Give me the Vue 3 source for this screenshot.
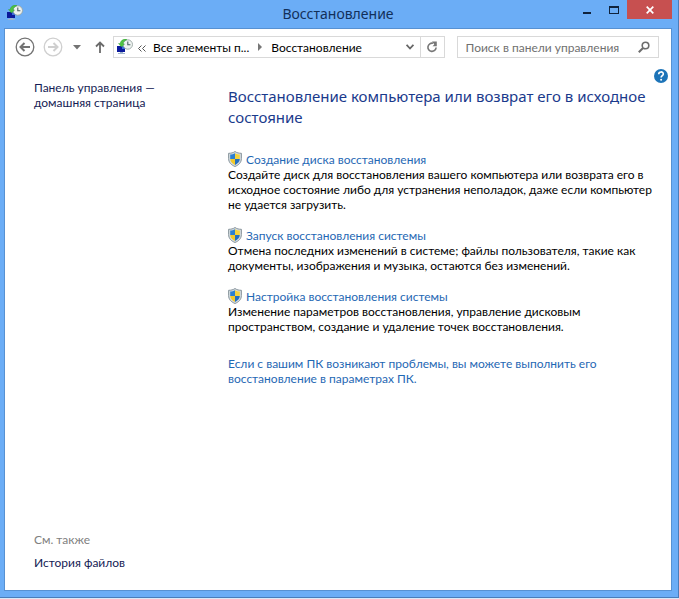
<script setup>
import { ref } from 'vue'

const query = ref('')
const tasks = [
  {
    title: 'Создание диска восстановления',
    lines: [
      'Создайте диск для восстановления вашего компьютера или возврата его в',
      'исходное состояние либо для устранения неполадок, даже если компьютер',
      'не удается загрузить.',
    ],
  },
  {
    title: 'Запуск восстановления системы',
    lines: [
      'Отмена последних изменений в системе; файлы пользователя, такие как',
      'документы, изображения и музыка, остаются без изменений.',
    ],
  },
  {
    title: 'Настройка восстановления системы',
    lines: [
      'Изменение параметров восстановления, управление дисковым',
      'пространством, создание и удаление точек восстановления.',
    ],
  },
]
</script>

<template>
  <div class="window">
    <svg class="defs" aria-hidden="true">
      <symbol id="recovery" viewBox="0 0 16 16">
        <path d="M0 7h8v6H0z" fill="#0b1a9c" />
        <path d="M5 7h3v3H5z" fill="#3e6fd8" />
        <path d="M3 13h3v1h2v1H1v-1h2z" fill="#9fb4cc" />
        <circle cx="10.800" cy="5.500" r="4.700" fill="#eef3f0" stroke="#9aa6a4" stroke-width=".9" />
        <path d="M10.800 2.500v3.300h2.600" fill="none" stroke="#4b5f63" stroke-width="1.100" />
        <path d="M9.500 0C5.500 0 3.500 2 3.200 4.500L1.500 4.500 4.500 8 7.500 5 6 4.700C6.200 3 7.500 1.500 9.500 1z" fill="#4fc342" stroke="#2d9a35" stroke-width=".4" />
      </symbol>
      <symbol id="shield" viewBox="0 0 14 16">
        <path d="M7 .5C5.200 1.800 3 2.300.6 2.300v5.200c0 4 2.600 6.500 6.400 8 3.800-1.500 6.400-4 6.400-8V2.300C11 2.300 8.800 1.800 7 .5z" fill="#d5dde2" stroke="#7e8b93" stroke-width=".9" />
        <path d="M7 2.200C5.500 3.100 4 3.500 2.200 3.600V8H7z" fill="#2b7fd0" />
        <path d="M7 2.200c1.500.9 3 1.300 4.800 1.400V8H7z" fill="#f5d33c" />
        <path d="M2.200 8c.2 2.800 2 4.700 4.800 5.900V8z" fill="#f2c929" />
        <path d="M11.800 8c-.2 2.800-2 4.700-4.800 5.900V8z" fill="#236fc0" />
      </symbol>
    </svg>

    <header class="titlebar">
      <svg class="app-icon"><use href="#recovery" /></svg>
      <h1>Восстановление</h1>
      <div class="controls">
        <button class="control" aria-label="Свернуть">
          <svg width="10" height="10" viewBox="0 0 10 10"><path d="M1 7h8v2H1z" fill="#10233d" /></svg>
        </button>
        <button class="control" aria-label="Развернуть">
          <svg width="10" height="8" viewBox="0 0 10 8"><path d="M0 0h10v8H0zM1 2v5h8V2z" fill="#10233d" fill-rule="evenodd" /></svg>
        </button>
        <button class="control close" aria-label="Закрыть">
          <svg width="8" height="8" viewBox="0 0 8 8"><path d="M.7.7l6.600 6.600M7.300.7L.7 7.300" stroke="#fff" stroke-width="1.700" /></svg>
        </button>
      </div>
    </header>

    <div class="client">
      <nav class="toolbar">
        <button class="icon-button" aria-label="Назад">
          <svg width="20" height="20" viewBox="0 0 20 20" fill="none" stroke="#737373">
            <circle cx="10" cy="10" r="8.800" stroke-width="1.300" />
            <path d="M15 10H6M9.500 6L5.500 10l4 4" stroke-width="2" />
          </svg>
        </button>
        <button class="icon-button forward" aria-label="Вперед">
          <svg width="20" height="20" viewBox="0 0 20 20" fill="none" stroke="#cfcfcf">
            <circle cx="10" cy="10" r="8.800" stroke-width="1.300" />
            <path d="M5 10h9M10.500 6l4 4-4 4" stroke-width="2" />
          </svg>
        </button>
        <button class="icon-button recent" aria-label="Последние расположения">
          <svg width="8" height="5" viewBox="0 0 8 5"><path d="M0 0h8L4 4.500z" fill="#737373" /></svg>
        </button>
        <button class="icon-button up" aria-label="Вверх">
          <svg width="10" height="12" viewBox="0 0 10 12" fill="none" stroke="#6b6b6b" stroke-width="1.800"><path d="M5 12V1.500M1 5.500l4-4 4 4" /></svg>
        </button>
        <div class="address">
          <svg class="place-icon"><use href="#recovery" /></svg>
          <svg class="chevrons" width="8" height="7" viewBox="0 0 8 7" fill="none" stroke="#555"><path d="M3.500.5l-3 3 3 3M7.500.5l-3 3 3 3" /></svg>
          <a class="crumb" href="#">Все элементы п...</a>
          <svg class="separator" width="4" height="8" viewBox="0 0 4 8"><path d="M0 0l4 4-4 4z" fill="#777" /></svg>
          <a class="crumb" href="#">Восстановление</a>
          <button class="icon-button history" aria-label="Журнал адресов">
            <svg width="8" height="6" viewBox="0 0 8 6" fill="none" stroke="#666" stroke-width="1.800"><path d="M.6.8L4 4.500 7.400.8" /></svg>
          </button>
          <button class="icon-button refresh" aria-label="Обновить">
            <svg width="12" height="12" viewBox="0 0 12 12"><path d="M7 2.300A4.100 4.100 0 1 0 10.100 6.500" fill="none" stroke="#777" stroke-width="1.600" /><path d="M6 .5h4.800v4.800H6.500L8.300 3.500z" fill="#777" /></svg>
          </button>
        </div>
        <label class="search">
          <input v-model="query" type="text" placeholder="Поиск в панели управления" aria-label="Поиск в панели управления" />
          <svg width="12" height="12" viewBox="0 0 12 12" fill="none" stroke="#6d6d6d"><circle cx="7.500" cy="4.500" r="3.300" stroke-width="1.600" /><path d="M5 7L.8 11.200" stroke-width="2" /></svg>
        </label>
      </nav>

      <div class="body">
        <aside>
          <a href="#">Панель управления —<br />домашняя страница</a>
          <div class="related">
            <p>См. также</p>
            <a href="#">История файлов</a>
          </div>
        </aside>
        <main>
          <h2>Восстановление компьютера или возврат его в исходное состояние</h2>
          <section v-for="task in tasks" :key="task.title">
            <a class="task" href="#"><svg class="shield"><use href="#shield" /></svg>{{ task.title }}</a>
            <p><template v-for="(line, i) in task.lines" :key="i"><br v-if="i" />{{ line }}</template></p>
          </section>
          <a class="more" href="#">Если с вашим ПК возникают проблемы, вы можете выполнить его<br />восстановление в параметрах ПК.</a>
        </main>
        <button class="help" aria-label="Справка">
          <svg width="14" height="14" viewBox="0 0 14 14">
            <circle cx="7" cy="7" r="7" fill="#1d74b8" />
            <path d="M4.700 5.200C4.700 2.200 9.300 2.200 9.300 5c0 1.700-2.200 1.700-2.200 3.600" fill="none" stroke="#fff" stroke-width="1.600" />
            <circle cx="7.100" cy="10.800" r="1" fill="#fff" />
          </svg>
        </button>
      </div>
    </div>
  </div>
</template>

<style>
body {
  background: #dbe9f8;
}
</style>

<style scoped>
.window {
  box-sizing: border-box;
  display: flex;
  flex-direction: column;
  min-height: calc(100vh - 1px);
  padding: 0 6px 6px 4px;
  border-right: 1px solid #4a7dba;
  border-bottom: 1px solid #4a7dba;
  background: #6badf6;
  font: 12px/15px Lato, "Noto Sans", sans-serif;
  color: #000;
}
.defs {
  position: absolute;
  width: 0;
  height: 0;
}
h1, h2, p {
  margin: 0;
  font-weight: 400;
}
h1, h2 {
  font-family: "Noto Sans", "Open Sans", sans-serif;
}
a {
  text-decoration: none;
}
button {
  padding: 0;
  border: 0;
  background: none;
  font: inherit;
}
.titlebar {
  display: grid;
  grid-template-columns: 1fr auto 1fr;
  height: 28px;
}
.app-icon {
  width: 16px;
  height: 16px;
  margin: 5px 0 0 3px;
}
h1 {
  font-size: 14px;
  line-height: 28px;
  color: #12305a;
}
.controls {
  display: flex;
  justify-content: flex-end;
  align-items: flex-start;
}
.control {
  display: flex;
  align-items: center;
  justify-content: center;
  width: 27px;
  height: 19px;
}
.close {
  width: 45px;
  background: #c75050;
}
.client {
  flex: 1;
  display: flex;
  flex-direction: column;
  border: 1px solid #5791d2;
  background: #fff;
}
.toolbar {
  display: flex;
  align-items: center;
  padding: 7px 12px 0 10px;
}
.icon-button {
  display: flex;
  align-items: center;
  justify-content: center;
  flex: none;
}
.forward {
  margin-left: 8px;
}
.recent {
  margin-left: 10px;
}
.up {
  margin: 0 8px 0 14px;
}
.address,
.search {
  box-sizing: border-box;
  display: flex;
  align-items: center;
  height: 22px;
  border: 1px solid #d9d9d9;
}
.address {
  flex: 332;
  min-width: 0;
}
.place-icon {
  flex: none;
  width: 16px;
  height: 16px;
  margin-left: 3px;
}
.chevrons {
  flex: none;
  margin: 2px 7px 0 5px;
}
.crumb {
  color: #000;
  white-space: nowrap;
}
.separator {
  flex: none;
  margin: 0 9px;
}
.history {
  width: 20px;
  height: 20px;
  margin-left: auto;
}
.refresh {
  width: 24px;
  height: 20px;
  border-left: 1px solid #d9d9d9;
}
.search {
  flex: 202;
  min-width: 0;
  margin-left: 12px;
}
.search svg {
  flex: none;
  margin-right: 8px;
}
input {
  flex: 1;
  min-width: 0;
  padding: 0 0 0 8px;
  border: 0;
  outline: 0;
  background: none;
  font: inherit;
}
input::placeholder {
  color: #707070;
  opacity: 1;
}
.body {
  flex: 1;
  display: grid;
  grid-template-columns: 194px 1fr auto;
  padding: 11px 3px 20px 29px;
}
aside {
  display: flex;
  flex-direction: column;
  justify-content: space-between;
  padding-top: 11px;
}
aside a {
  color: #151c55;
}
.related p {
  margin-bottom: 8px;
  color: #808080;
}
.related a {
  display: block;
}
main {
  padding-top: 17px;
}
h2 {
  max-width: 425px;
  margin-bottom: 23px;
  font-size: 15px;
  line-height: 21px;
  color: #1a3a8c;
}
section {
  margin-bottom: 15px;
}
section p,
.more {
  white-space: nowrap;
}
.task,
.more {
  color: #1f68b4;
}
.task {
  display: flex;
  align-items: center;
  gap: 4px;
  height: 16px;
}
.shield {
  width: 14px;
  height: 16px;
}
.more {
  display: block;
  margin-top: 22px;
}
.help {
  align-self: start;
  height: 14px;
}
.help svg {
  display: block;
}
</style>
